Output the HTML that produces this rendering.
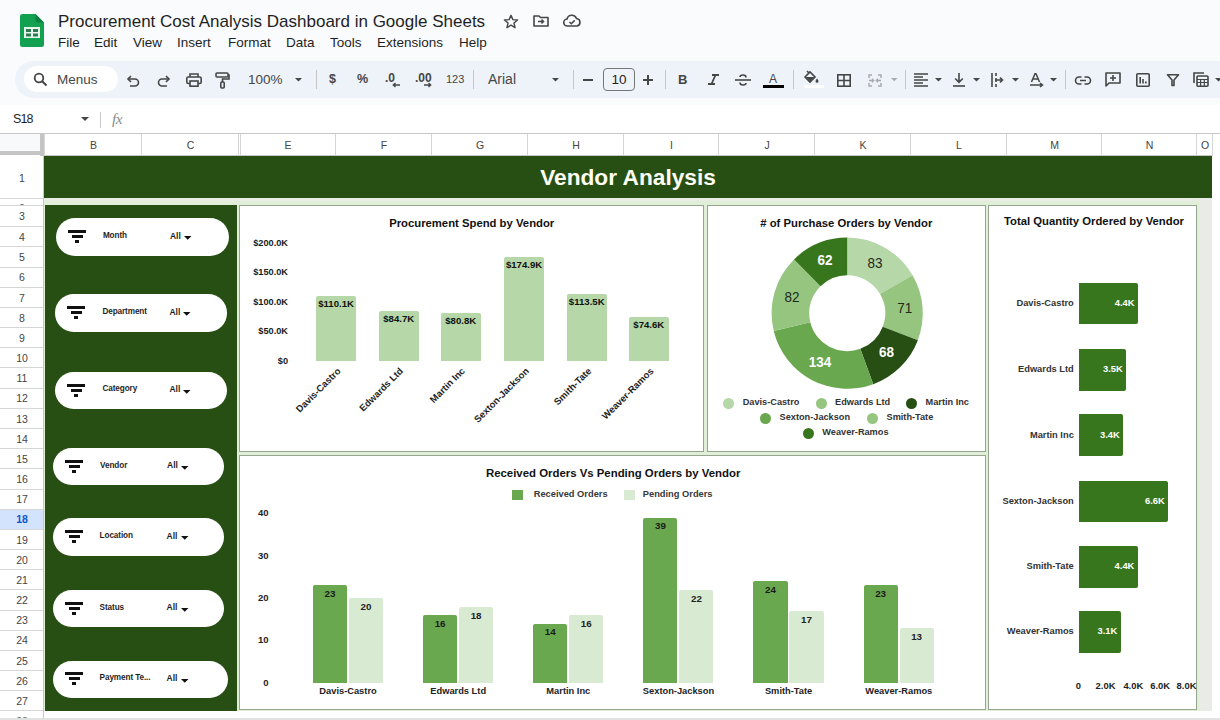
<!DOCTYPE html>
<html><head><meta charset="utf-8">
<style>
*{margin:0;padding:0;box-sizing:border-box}
html,body{width:1220px;height:720px;overflow:hidden;background:#f9fbfd;font-family:"Liberation Sans",sans-serif;color:#1f1f1f}
.a{position:absolute}
.t{position:absolute;white-space:nowrap;line-height:1}
svg{position:absolute;overflow:visible}
</style></head><body>
<div class="a" style="left:0px;top:0px;width:1220px;height:104px;background:#f9fbfd;"></div>
<svg style="left:20px;top:14px" width="24" height="33" viewBox="0 0 24 33">
<path d="M2.5 0H15.5L24 8.5V30.5a2.5 2.5 0 0 1-2.5 2.5H2.5A2.5 2.5 0 0 1 0 30.5V2.5A2.5 2.5 0 0 1 2.5 0z" fill="#11a150"/>
<path d="M15.5 0L24 8.5H18a2.5 2.5 0 0 1-2.5-2.5z" fill="#0b8043"/>
<rect x="4" y="13" width="16" height="11" fill="#e8f5ea"/>
<rect x="6" y="15" width="5" height="3" fill="#2b7a52"/><rect x="13" y="15" width="5" height="3" fill="#2b7a52"/>
<rect x="6" y="19.5" width="5" height="3" fill="#2b7a52"/><rect x="13" y="19.5" width="5" height="3" fill="#2b7a52"/>
</svg>
<div class="t" style="left:58px;top:13px;font-size:17px;color:#1f1f1f;">Procurement Cost Analysis Dashboard in Google Sheets</div>
<div class="t" style="left:58px;top:36px;font-size:13.5px;color:#1f1f1f;">File</div>
<div class="t" style="left:94px;top:36px;font-size:13.5px;color:#1f1f1f;">Edit</div>
<div class="t" style="left:133px;top:36px;font-size:13.5px;color:#1f1f1f;">View</div>
<div class="t" style="left:177px;top:36px;font-size:13.5px;color:#1f1f1f;">Insert</div>
<div class="t" style="left:228px;top:36px;font-size:13.5px;color:#1f1f1f;">Format</div>
<div class="t" style="left:286px;top:36px;font-size:13.5px;color:#1f1f1f;">Data</div>
<div class="t" style="left:330px;top:36px;font-size:13.5px;color:#1f1f1f;">Tools</div>
<div class="t" style="left:377px;top:36px;font-size:13.5px;color:#1f1f1f;">Extensions</div>
<div class="t" style="left:459px;top:36px;font-size:13.5px;color:#1f1f1f;">Help</div>
<svg style="left:503px;top:14px" width="16" height="15" viewBox="0 0 24 23"><path d="M12 2l2.9 6.6 7.1.6-5.4 4.7 1.6 7-6.2-3.7-6.2 3.7 1.6-7L2 9.2l7.1-.6z" fill="none" stroke="#444746" stroke-width="2.2" stroke-linejoin="round"/></svg>
<svg style="left:533px;top:15px" width="16" height="12" viewBox="0 0 16 12"><path d="M1 1h5l1.5 1.5H15V11H1z" fill="none" stroke="#444746" stroke-width="1.6" stroke-linejoin="round"/><path d="M5 6.5h5.5M8.5 4.5l2 2-2 2" fill="none" stroke="#444746" stroke-width="1.5"/></svg>
<svg style="left:563px;top:15px" width="18" height="12" viewBox="0 0 18 12"><path d="M4.5 11a3.5 3.5 0 0 1-.5-7A5 5 0 0 1 13.5 3.5 3.8 3.8 0 0 1 14 11z" fill="none" stroke="#444746" stroke-width="1.6"/><path d="M6.5 7l1.8 1.8 3.4-3.4" fill="none" stroke="#444746" stroke-width="1.5"/></svg>
<div class="a" style="left:15px;top:61px;width:1230px;height:37px;background:#eef2f9;border-radius:18.5px"></div>
<div class="a" style="left:24px;top:66px;width:94px;height:26px;background:#fff;border-radius:13px"></div>
<svg style="left:33px;top:72px" width="15" height="15" viewBox="0 0 15 15"><circle cx="6" cy="6" r="4.3" fill="none" stroke="#444746" stroke-width="1.8"/><path d="M9.2 9.2l4.3 4.3" stroke="#444746" stroke-width="2"/></svg>
<div class="t" style="left:57px;top:73px;font-size:13.5px;color:#444746;">Menus</div>
<svg style="left:127px;top:75px" width="13" height="12" viewBox="0 0 13 12"><path d="M4 1L1 4l3 3" fill="none" stroke="#444746" stroke-width="1.6"/><path d="M1.5 4H8a3.5 3.5 0 0 1 0 7H3" fill="none" stroke="#444746" stroke-width="1.6"/></svg>
<svg style="left:157px;top:75px" width="13" height="12" viewBox="0 0 13 12"><path d="M9 1l3 3-3 3" fill="none" stroke="#444746" stroke-width="1.6"/><path d="M11.5 4H5a3.5 3.5 0 0 0 0 7h5" fill="none" stroke="#444746" stroke-width="1.6"/></svg>
<svg style="left:186px;top:73px" width="16" height="14" viewBox="0 0 16 14"><path d="M4 4V1h8v3" fill="none" stroke="#444746" stroke-width="1.6"/><rect x="0.8" y="4" width="14.4" height="6.5" rx="1.5" fill="none" stroke="#444746" stroke-width="1.6"/><rect x="4" y="8" width="8" height="5.2" fill="#edf2fa" stroke="#444746" stroke-width="1.6"/></svg>
<svg style="left:215px;top:72px" width="15" height="17" viewBox="0 0 15 17"><rect x="1" y="1" width="12" height="4" rx="1" fill="none" stroke="#444746" stroke-width="1.6"/><path d="M13 3h1v4H7.5v3" fill="none" stroke="#444746" stroke-width="1.6"/><rect x="5.8" y="10" width="3.4" height="6" rx="1" fill="none" stroke="#444746" stroke-width="1.6"/></svg>
<div class="t" style="left:248px;top:73px;font-size:13.5px;color:#444746;">100%</div>
<svg style="left:294.5px;top:78px" width="7" height="3.5" viewBox="0 0 7 3.5"><path d="M0 0H7L3.5 3.5z" fill="#444746"/></svg>
<div class="a" style="left:315.5px;top:70px;width:1px;height:19px;background:#c7c7c7;"></div>
<div class="t" style="left:329px;top:73px;font-size:12.5px;color:#444746;font-weight:bold;">$</div>
<div class="t" style="left:357px;top:73px;font-size:12.5px;color:#444746;font-weight:bold;">%</div>
<div class="t" style="left:385px;top:72px;font-size:12px;color:#444746;font-weight:bold;">.0</div>
<svg style="left:392px;top:82px" width="8" height="6" viewBox="0 0 8 6"><path d="M8 3H1.5M3.5 1L1.3 3l2.2 2" fill="none" stroke="#444746" stroke-width="1.4"/></svg>
<div class="t" style="left:415px;top:72px;font-size:12px;color:#444746;font-weight:bold;">.00</div>
<svg style="left:424px;top:82px" width="8" height="6" viewBox="0 0 8 6"><path d="M0 3H6.5M4.5 1l2.2 2-2.2 2" fill="none" stroke="#444746" stroke-width="1.4"/></svg>
<div class="t" style="left:446px;top:74px;font-size:11px;color:#444746;">123</div>
<div class="a" style="left:473px;top:70px;width:1px;height:19px;background:#c7c7c7;"></div>
<div class="t" style="left:488px;top:72px;font-size:14px;color:#444746;">Arial</div>
<svg style="left:552px;top:78px" width="7" height="3.5" viewBox="0 0 7 3.5"><path d="M0 0H7L3.5 3.5z" fill="#444746"/></svg>
<div class="a" style="left:573px;top:70px;width:1px;height:19px;background:#c7c7c7;"></div>
<div class="a" style="left:583px;top:79px;width:10px;height:1.6px;background:#444746;"></div>
<div class="a" style="left:603px;top:68px;width:32px;height:23px;border:1px solid #747775;border-radius:4px"></div>
<div class="t" style="left:619px;top:73px;font-size:13.5px;color:#1f1f1f;transform:translateX(-50%);">10</div>
<div class="a" style="left:643px;top:79px;width:10px;height:1.6px;background:#444746;"></div>
<div class="a" style="left:647.2px;top:74.8px;width:1.6px;height:10px;background:#444746;"></div>
<div class="a" style="left:664.5px;top:70px;width:1px;height:19px;background:#c7c7c7;"></div>
<div class="t" style="left:678px;top:73px;font-size:13px;color:#444746;font-weight:bold;">B</div>
<svg style="left:708px;top:74px" width="11" height="11" viewBox="0 0 11 11"><path d="M4 1H11M0 10H7M7.5 1L3.5 10" fill="none" stroke="#444746" stroke-width="1.8"/></svg>
<svg style="left:735px;top:74px" width="16" height="12" viewBox="0 0 16 12"><path d="M0 6H16" stroke="#444746" stroke-width="1.6"/><path d="M11 3.5C11 1.8 9.8 1 8 1S5 1.8 5 3" fill="none" stroke="#444746" stroke-width="1.6"/><path d="M5 8.5C5 10.2 6.2 11 8 11S11 10.2 11 9" fill="none" stroke="#444746" stroke-width="1.6"/></svg>
<div class="t" style="left:769px;top:73px;font-size:12px;color:#444746;">A</div>
<div class="a" style="left:763px;top:85px;width:21px;height:3px;background:#000;"></div>
<div class="a" style="left:793px;top:70px;width:1px;height:19px;background:#c7c7c7;"></div>
<svg style="left:803px;top:70px" width="16" height="13" viewBox="0 0 16 13"><path d="M4 1l1.5 1.5M2 7l5-5 5 5-5 5z" fill="none" stroke="#444746" stroke-width="1.6"/><path d="M2.5 7h9L7 11.5z" fill="#444746"/><path d="M14 8.5c0 0-1.5 1.8-1.5 2.7a1.5 1.5 0 0 0 3 0c0-.9-1.5-2.7-1.5-2.7z" fill="#444746"/></svg>
<div class="a" style="left:804px;top:85px;width:20px;height:3px;background:#fff;"></div>
<svg style="left:837px;top:74px" width="14" height="13" viewBox="0 0 14 13"><rect x="0.8" y="0.8" width="12.4" height="11.4" fill="none" stroke="#444746" stroke-width="1.6"/><path d="M7 1v11M1 6.5h12" stroke="#444746" stroke-width="1.6"/></svg>
<svg style="left:868px;top:74px" width="14" height="13" viewBox="0 0 14 13"><path d="M1 4V1h3M13 4V1h-3M1 9v3h3M13 9v3h-3" fill="none" stroke="#a8abae" stroke-width="1.5"/><path d="M1 6.5h4.5M4 4.8l1.7 1.7L4 8.2M13 6.5H8.5M10 4.8L8.3 6.5 10 8.2" fill="none" stroke="#a8abae" stroke-width="1.4"/></svg>
<svg style="left:891px;top:78px" width="6.5" height="3.2" viewBox="0 0 6.5 3.2"><path d="M0 0H6.5L3.25 3.2z" fill="#a8abae"/></svg>
<div class="a" style="left:904.5px;top:70px;width:1px;height:19px;background:#c7c7c7;"></div>
<svg style="left:913.5px;top:73px" width="14" height="14" viewBox="0 0 14 14"><path d="M0 1H14M0 4H9M0 7H14M0 10H9M0 13H14" stroke="#444746" stroke-width="1.5"/></svg>
<svg style="left:934.5px;top:78px" width="7" height="3.5" viewBox="0 0 7 3.5"><path d="M0 0H7L3.5 3.5z" fill="#444746"/></svg>
<svg style="left:953px;top:73px" width="12" height="14" viewBox="0 0 12 14"><path d="M6 0V9M2.2 5.5L6 9.3l3.8-3.8" fill="none" stroke="#444746" stroke-width="1.6"/><path d="M0 13H12" stroke="#444746" stroke-width="1.6"/></svg>
<svg style="left:973px;top:78px" width="7" height="3.5" viewBox="0 0 7 3.5"><path d="M0 0H7L3.5 3.5z" fill="#444746"/></svg>
<svg style="left:991px;top:73px" width="13" height="14" viewBox="0 0 13 14"><path d="M1 0V14" stroke="#444746" stroke-width="1.6"/><path d="M5 0v3M5 5v4M5 11v3" stroke="#444746" stroke-width="1.6"/><path d="M4 7h7M9 4.5L11.5 7 9 9.5" fill="none" stroke="#444746" stroke-width="1.6"/></svg>
<svg style="left:1011.5px;top:78px" width="7" height="3.5" viewBox="0 0 7 3.5"><path d="M0 0H7L3.5 3.5z" fill="#444746"/></svg>
<svg style="left:1030px;top:73px" width="14" height="14" viewBox="0 0 14 14"><path d="M1.5 9L5 0.8h1L9.5 9M3 6h5" fill="none" stroke="#444746" stroke-width="1.5"/><path d="M0 12H12M10 10l2.5 2-2.5 2" fill="none" stroke="#444746" stroke-width="1.5"/></svg>
<svg style="left:1050px;top:78px" width="7" height="3.5" viewBox="0 0 7 3.5"><path d="M0 0H7L3.5 3.5z" fill="#444746"/></svg>
<div class="a" style="left:1065px;top:70px;width:1px;height:19px;background:#c7c7c7;"></div>
<svg style="left:1075px;top:76px" width="16" height="9" viewBox="0 0 16 9"><path d="M6.5 1H4a3.5 3.5 0 0 0 0 7h2.5M9.5 1H12a3.5 3.5 0 0 1 0 7H9.5M5 4.5h6" fill="none" stroke="#444746" stroke-width="1.6"/></svg>
<svg style="left:1105px;top:72px" width="16" height="15" viewBox="0 0 16 15"><path d="M1 1h14v10H4l-3 3z" fill="none" stroke="#444746" stroke-width="1.6" stroke-linejoin="round"/><path d="M8 3v6M5 6h6" stroke="#444746" stroke-width="1.6"/></svg>
<svg style="left:1136px;top:73px" width="14" height="14" viewBox="0 0 14 14"><rect x="0.8" y="0.8" width="12.4" height="12.4" rx="1" fill="none" stroke="#444746" stroke-width="1.6"/><path d="M4.2 4v6.5M7 6v4.5M9.8 8.5v2" stroke="#444746" stroke-width="1.6"/></svg>
<svg style="left:1167px;top:74px" width="12" height="12" viewBox="0 0 12 12"><path d="M0.5 0.8h11L7 6v5.5H5V6z" fill="none" stroke="#444746" stroke-width="1.6" stroke-linejoin="round"/></svg>
<svg style="left:1193px;top:72px" width="16" height="15" viewBox="0 0 16 15"><path d="M1 11V1h10" fill="none" stroke="#444746" stroke-width="1.6"/><rect x="4" y="4" width="11" height="10.3" rx="1" fill="none" stroke="#444746" stroke-width="1.6"/><path d="M4 7.5h11M4 10.5h11M7.6 7.5v7M11.3 7.5v7" stroke="#444746" stroke-width="1.2"/></svg>
<svg style="left:1215px;top:78px" width="7" height="3.5" viewBox="0 0 7 3.5"><path d="M0 0H7L3.5 3.5z" fill="#444746"/></svg>
<div class="a" style="left:0px;top:104.5px;width:1220px;height:28.5px;background:#fff;"></div>
<div class="t" style="left:13px;top:113px;font-size:12.5px;color:#1f1f1f;letter-spacing:-0.9px;">S18</div>
<svg style="left:81px;top:117px" width="8" height="4" viewBox="0 0 8 4"><path d="M0 0H8L4.0 4z" fill="#444746"/></svg>
<div class="a" style="left:100px;top:112px;width:1px;height:16px;background:#c7c7c7;"></div>
<div class="t" style="left:112px;top:110.5px;font-size:15.5px;color:#8c8c8c;font-style:italic;font-family:'Liberation Serif',serif;letter-spacing:-0.5px">fx</div>
<div class="a" style="left:0px;top:133px;width:1220px;height:587px;background:#fff;"></div>
<div class="a" style="left:0px;top:133px;width:1220px;height:1px;background:#c7c7c7;"></div>
<div class="a" style="left:141px;top:134px;width:1px;height:22px;background:#d6d6d6;"></div>
<div class="t" style="left:93.5px;top:139.5px;font-size:10.5px;color:#444;transform:translateX(-50%);">B</div>
<div class="a" style="left:238px;top:134px;width:1px;height:22px;background:#d6d6d6;"></div>
<div class="t" style="left:190.5px;top:139.5px;font-size:10.5px;color:#444;transform:translateX(-50%);">C</div>
<div class="a" style="left:335px;top:134px;width:1px;height:22px;background:#d6d6d6;"></div>
<div class="t" style="left:288.0px;top:139.5px;font-size:10.5px;color:#444;transform:translateX(-50%);">E</div>
<div class="a" style="left:431px;top:134px;width:1px;height:22px;background:#d6d6d6;"></div>
<div class="t" style="left:384.0px;top:139.5px;font-size:10.5px;color:#444;transform:translateX(-50%);">F</div>
<div class="a" style="left:527px;top:134px;width:1px;height:22px;background:#d6d6d6;"></div>
<div class="t" style="left:480.0px;top:139.5px;font-size:10.5px;color:#444;transform:translateX(-50%);">G</div>
<div class="a" style="left:623px;top:134px;width:1px;height:22px;background:#d6d6d6;"></div>
<div class="t" style="left:576.0px;top:139.5px;font-size:10.5px;color:#444;transform:translateX(-50%);">H</div>
<div class="a" style="left:718px;top:134px;width:1px;height:22px;background:#d6d6d6;"></div>
<div class="t" style="left:671.5px;top:139.5px;font-size:10.5px;color:#444;transform:translateX(-50%);">I</div>
<div class="a" style="left:814px;top:134px;width:1px;height:22px;background:#d6d6d6;"></div>
<div class="t" style="left:767.0px;top:139.5px;font-size:10.5px;color:#444;transform:translateX(-50%);">J</div>
<div class="a" style="left:910px;top:134px;width:1px;height:22px;background:#d6d6d6;"></div>
<div class="t" style="left:863.0px;top:139.5px;font-size:10.5px;color:#444;transform:translateX(-50%);">K</div>
<div class="a" style="left:1006px;top:134px;width:1px;height:22px;background:#d6d6d6;"></div>
<div class="t" style="left:959.0px;top:139.5px;font-size:10.5px;color:#444;transform:translateX(-50%);">L</div>
<div class="a" style="left:1101px;top:134px;width:1px;height:22px;background:#d6d6d6;"></div>
<div class="t" style="left:1054.5px;top:139.5px;font-size:10.5px;color:#444;transform:translateX(-50%);">M</div>
<div class="a" style="left:1196px;top:134px;width:1px;height:22px;background:#d6d6d6;"></div>
<div class="t" style="left:1149.5px;top:139.5px;font-size:10.5px;color:#444;transform:translateX(-50%);">N</div>
<div class="a" style="left:1212px;top:134px;width:1px;height:22px;background:#d6d6d6;"></div>
<div class="t" style="left:1205.0px;top:139.5px;font-size:10.5px;color:#444;transform:translateX(-50%);">O</div>
<div class="a" style="left:238px;top:134px;width:1px;height:22px;background:#d6d6d6;"></div>
<div class="a" style="left:240px;top:134px;width:1px;height:22px;background:#d6d6d6;"></div>
<div class="a" style="left:44px;top:155px;width:1168px;height:1px;background:#c7c7c7;"></div>
<div class="a" style="left:0px;top:134px;width:40px;height:18px;background:#f8f9fa;"></div>
<div class="a" style="left:40px;top:133px;width:4px;height:23px;background:#c4c4c4;"></div>
<div class="a" style="left:0px;top:151px;width:44px;height:4px;background:#c4c4c4;"></div>
<div class="a" style="left:44px;top:134px;width:1px;height:22px;background:#d6d6d6;"></div>
<div class="a" style="left:43px;top:156px;width:1px;height:564px;background:#c7c7c7;"></div>
<div class="a" style="left:0px;top:198px;width:43px;height:1px;background:#d6d6d6;"></div>
<div class="t" style="left:22px;top:172.95px;font-size:10.5px;color:#444;transform:translateX(-50%);">1</div>
<div class="a" style="left:0px;top:205px;width:43px;height:1px;background:#d6d6d6;"></div>
<div class="a" style="left:12px;top:203px;width:20px;height:2px;overflow:hidden"><div class="t" style="left:10px;top:-0.5px;font-size:10.5px;color:#666;transform:translateX(-50%)">2</div></div>
<div class="a" style="left:0px;top:226px;width:43px;height:1px;background:#d6d6d6;"></div>
<div class="t" style="left:22px;top:211.35px;font-size:10.5px;color:#444;transform:translateX(-50%);">3</div>
<div class="a" style="left:0px;top:246px;width:43px;height:1px;background:#d6d6d6;"></div>
<div class="t" style="left:22px;top:232.085px;font-size:10.5px;color:#444;transform:translateX(-50%);">4</div>
<div class="a" style="left:0px;top:267px;width:43px;height:1px;background:#d6d6d6;"></div>
<div class="t" style="left:22px;top:252.25500000000005px;font-size:10.5px;color:#444;transform:translateX(-50%);">5</div>
<div class="a" style="left:0px;top:287px;width:43px;height:1px;background:#d6d6d6;"></div>
<div class="t" style="left:22px;top:272.425px;font-size:10.5px;color:#444;transform:translateX(-50%);">6</div>
<div class="a" style="left:0px;top:307px;width:43px;height:1px;background:#d6d6d6;"></div>
<div class="t" style="left:22px;top:292.5950000000001px;font-size:10.5px;color:#444;transform:translateX(-50%);">7</div>
<div class="a" style="left:0px;top:327px;width:43px;height:1px;background:#d6d6d6;"></div>
<div class="t" style="left:22px;top:312.76500000000004px;font-size:10.5px;color:#444;transform:translateX(-50%);">8</div>
<div class="a" style="left:0px;top:347px;width:43px;height:1px;background:#d6d6d6;"></div>
<div class="t" style="left:22px;top:332.9350000000001px;font-size:10.5px;color:#444;transform:translateX(-50%);">9</div>
<div class="a" style="left:0px;top:367px;width:43px;height:1px;background:#d6d6d6;"></div>
<div class="t" style="left:22px;top:353.1050000000001px;font-size:10.5px;color:#444;transform:translateX(-50%);">10</div>
<div class="a" style="left:0px;top:388px;width:43px;height:1px;background:#d6d6d6;"></div>
<div class="t" style="left:22px;top:373.27500000000015px;font-size:10.5px;color:#444;transform:translateX(-50%);">11</div>
<div class="a" style="left:0px;top:408px;width:43px;height:1px;background:#d6d6d6;"></div>
<div class="t" style="left:22px;top:393.4450000000001px;font-size:10.5px;color:#444;transform:translateX(-50%);">12</div>
<div class="a" style="left:0px;top:428px;width:43px;height:1px;background:#d6d6d6;"></div>
<div class="t" style="left:22px;top:413.6150000000002px;font-size:10.5px;color:#444;transform:translateX(-50%);">13</div>
<div class="a" style="left:0px;top:448px;width:43px;height:1px;background:#d6d6d6;"></div>
<div class="t" style="left:22px;top:433.78500000000014px;font-size:10.5px;color:#444;transform:translateX(-50%);">14</div>
<div class="a" style="left:0px;top:468px;width:43px;height:1px;background:#d6d6d6;"></div>
<div class="t" style="left:22px;top:453.9550000000002px;font-size:10.5px;color:#444;transform:translateX(-50%);">15</div>
<div class="a" style="left:0px;top:489px;width:43px;height:1px;background:#d6d6d6;"></div>
<div class="t" style="left:22px;top:474.12500000000017px;font-size:10.5px;color:#444;transform:translateX(-50%);">16</div>
<div class="a" style="left:0px;top:509px;width:43px;height:1px;background:#d6d6d6;"></div>
<div class="t" style="left:22px;top:494.29500000000024px;font-size:10.5px;color:#444;transform:translateX(-50%);">17</div>
<div class="a" style="left:0px;top:529px;width:43px;height:1px;background:#d6d6d6;"></div>
<div class="a" style="left:0px;top:510px;width:43px;height:19px;background:#d3e3fd;"></div>
<div class="t" style="left:22px;top:514.4650000000003px;font-size:10.5px;color:#0b57d0;font-weight:bold;transform:translateX(-50%);">18</div>
<div class="a" style="left:0px;top:549px;width:43px;height:1px;background:#d6d6d6;"></div>
<div class="t" style="left:22px;top:534.6350000000002px;font-size:10.5px;color:#444;transform:translateX(-50%);">19</div>
<div class="a" style="left:0px;top:569px;width:43px;height:1px;background:#d6d6d6;"></div>
<div class="t" style="left:22px;top:554.8050000000003px;font-size:10.5px;color:#444;transform:translateX(-50%);">20</div>
<div class="a" style="left:0px;top:589px;width:43px;height:1px;background:#d6d6d6;"></div>
<div class="t" style="left:22px;top:574.9750000000001px;font-size:10.5px;color:#444;transform:translateX(-50%);">21</div>
<div class="a" style="left:0px;top:610px;width:43px;height:1px;background:#d6d6d6;"></div>
<div class="t" style="left:22px;top:595.1450000000002px;font-size:10.5px;color:#444;transform:translateX(-50%);">22</div>
<div class="a" style="left:0px;top:630px;width:43px;height:1px;background:#d6d6d6;"></div>
<div class="t" style="left:22px;top:615.315px;font-size:10.5px;color:#444;transform:translateX(-50%);">23</div>
<div class="a" style="left:0px;top:650px;width:43px;height:1px;background:#d6d6d6;"></div>
<div class="t" style="left:22px;top:635.4850000000001px;font-size:10.5px;color:#444;transform:translateX(-50%);">24</div>
<div class="a" style="left:0px;top:670px;width:43px;height:1px;background:#d6d6d6;"></div>
<div class="t" style="left:22px;top:655.655px;font-size:10.5px;color:#444;transform:translateX(-50%);">25</div>
<div class="a" style="left:0px;top:690px;width:43px;height:1px;background:#d6d6d6;"></div>
<div class="t" style="left:22px;top:675.825px;font-size:10.5px;color:#444;transform:translateX(-50%);">26</div>
<div class="a" style="left:0px;top:710px;width:43px;height:1px;background:#d6d6d6;"></div>
<div class="t" style="left:22px;top:695.9949999999999px;font-size:10.5px;color:#444;transform:translateX(-50%);">27</div>
<div class="a" style="left:44px;top:156px;width:1168px;height:41.6px;background:#274e13;"></div>
<div class="t" style="left:628px;top:166px;font-size:22.7px;color:#fffff5;font-weight:bold;transform:translateX(-50%);">Vendor Analysis</div>
<div class="a" style="left:44px;top:197.6px;width:1153px;height:513.4px;background:#e1efd9;"></div>
<div class="a" style="left:44px;top:197.6px;width:1153px;height:3px;background:#e9ece4;"></div>
<div class="a" style="left:1197px;top:197.6px;width:15px;height:513.4px;background:#e9ece6;"></div>
<div class="a" style="left:1197px;top:197.6px;width:2px;height:513.4px;background:#e1efd9;"></div>
<div class="a" style="left:45px;top:205px;width:191.5px;height:506px;background:#274e13;"></div>
<div class="a" style="left:239px;top:205px;width:465px;height:247px;background:#fff;border:1px solid #94a68f"></div>
<div class="a" style="left:707px;top:205px;width:279px;height:247px;background:#fff;border:1px solid #94a68f"></div>
<div class="a" style="left:988px;top:205px;width:209px;height:505px;background:#fff;border:1px solid #94a68f"></div>
<div class="a" style="left:239px;top:455px;width:747px;height:255px;background:#fff;border:1px solid #94a68f"></div>
<div class="a" style="left:0px;top:718px;width:1220px;height:2px;background:#e1e3e1;"></div>
<div class="a" style="left:12px;top:716.5px;width:20px;height:1.5px;overflow:hidden"><div class="t" style="left:10px;top:-0.5px;font-size:10.5px;color:#666;transform:translateX(-50%)">28</div></div>
<div class="a" style="left:55.9px;top:218.1px;width:172.9px;height:38.2px;background:#fff;border-radius:19.10000000000001px"></div>
<div class="a" style="left:68px;top:230px;width:18px;height:3px;background:#111;"></div>
<div class="a" style="left:72px;top:235px;width:11px;height:2.5px;background:#111;"></div>
<div class="a" style="left:75px;top:240px;width:4px;height:2.5px;background:#111;"></div>
<div class="t" style="left:102.9px;top:232.1px;font-size:8.2px;color:#1f1f1f;font-weight:bold;letter-spacing:-0.1px;">Month</div>
<div class="t" style="left:169.9px;top:231.7px;font-size:8.5px;color:#1f1f1f;font-weight:bold;">All</div>
<svg style="left:183.9px;top:236.4px" width="7.5" height="3.8" viewBox="0 0 7.5 3.8"><path d="M0 0H7.5L3.75 3.8z" fill="#111"/></svg>
<div class="a" style="left:55.4px;top:294.4px;width:172.1px;height:37.3px;background:#fff;border-radius:18.650000000000006px"></div>
<div class="a" style="left:67px;top:306px;width:18px;height:3px;background:#111;"></div>
<div class="a" style="left:71px;top:311px;width:11px;height:2.5px;background:#111;"></div>
<div class="a" style="left:74px;top:316px;width:4px;height:2.5px;background:#111;"></div>
<div class="t" style="left:102.4px;top:307.94999999999993px;font-size:8.2px;color:#1f1f1f;font-weight:bold;letter-spacing:-0.1px;">Department</div>
<div class="t" style="left:169.4px;top:307.54999999999995px;font-size:8.5px;color:#1f1f1f;font-weight:bold;">All</div>
<svg style="left:183.4px;top:312.2px" width="7.5" height="3.8" viewBox="0 0 7.5 3.8"><path d="M0 0H7.5L3.75 3.8z" fill="#111"/></svg>
<div class="a" style="left:55.4px;top:371.7px;width:172.1px;height:37.3px;background:#fff;border-radius:18.650000000000006px"></div>
<div class="a" style="left:67px;top:384px;width:18px;height:3px;background:#111;"></div>
<div class="a" style="left:71px;top:389px;width:11px;height:2.5px;background:#111;"></div>
<div class="a" style="left:74px;top:394px;width:4px;height:2.5px;background:#111;"></div>
<div class="t" style="left:102.4px;top:385.25px;font-size:8.2px;color:#1f1f1f;font-weight:bold;letter-spacing:-0.1px;">Category</div>
<div class="t" style="left:169.4px;top:384.85px;font-size:8.5px;color:#1f1f1f;font-weight:bold;">All</div>
<svg style="left:183.4px;top:389.6px" width="7.5" height="3.8" viewBox="0 0 7.5 3.8"><path d="M0 0H7.5L3.75 3.8z" fill="#111"/></svg>
<div class="a" style="left:53.1px;top:448.1px;width:170.9px;height:37.3px;background:#fff;border-radius:18.649999999999977px"></div>
<div class="a" style="left:65px;top:460px;width:18px;height:3px;background:#111;"></div>
<div class="a" style="left:69px;top:465px;width:11px;height:2.5px;background:#111;"></div>
<div class="a" style="left:72px;top:470px;width:4px;height:2.5px;background:#111;"></div>
<div class="t" style="left:100.1px;top:461.65px;font-size:8.2px;color:#1f1f1f;font-weight:bold;letter-spacing:-0.1px;">Vendor</div>
<div class="t" style="left:167.1px;top:461.25px;font-size:8.5px;color:#1f1f1f;font-weight:bold;">All</div>
<svg style="left:181.1px;top:465.9px" width="7.5" height="3.8" viewBox="0 0 7.5 3.8"><path d="M0 0H7.5L3.75 3.8z" fill="#111"/></svg>
<div class="a" style="left:52.6px;top:518.3px;width:171.4px;height:37.7px;background:#fff;border-radius:18.850000000000023px"></div>
<div class="a" style="left:65px;top:530px;width:18px;height:3px;background:#111;"></div>
<div class="a" style="left:69px;top:535px;width:11px;height:2.5px;background:#111;"></div>
<div class="a" style="left:72px;top:540px;width:4px;height:2.5px;background:#111;"></div>
<div class="t" style="left:99.6px;top:532.05px;font-size:8.2px;color:#1f1f1f;font-weight:bold;letter-spacing:-0.1px;">Location</div>
<div class="t" style="left:166.6px;top:531.65px;font-size:8.5px;color:#1f1f1f;font-weight:bold;">All</div>
<svg style="left:180.6px;top:536.4px" width="7.5" height="3.8" viewBox="0 0 7.5 3.8"><path d="M0 0H7.5L3.75 3.8z" fill="#111"/></svg>
<div class="a" style="left:52.6px;top:590.2px;width:171.4px;height:37.2px;background:#fff;border-radius:18.599999999999966px"></div>
<div class="a" style="left:65px;top:602px;width:18px;height:3px;background:#111;"></div>
<div class="a" style="left:69px;top:607px;width:11px;height:2.5px;background:#111;"></div>
<div class="a" style="left:72px;top:612px;width:4px;height:2.5px;background:#111;"></div>
<div class="t" style="left:99.6px;top:603.6999999999999px;font-size:8.2px;color:#1f1f1f;font-weight:bold;letter-spacing:-0.1px;">Status</div>
<div class="t" style="left:166.6px;top:603.3px;font-size:8.5px;color:#1f1f1f;font-weight:bold;">All</div>
<svg style="left:180.6px;top:608.0px" width="7.5" height="3.8" viewBox="0 0 7.5 3.8"><path d="M0 0H7.5L3.75 3.8z" fill="#111"/></svg>
<div class="a" style="left:52.6px;top:660.5px;width:175.7px;height:37.5px;background:#fff;border-radius:18.75px"></div>
<div class="a" style="left:65px;top:672px;width:18px;height:3px;background:#111;"></div>
<div class="a" style="left:69px;top:677px;width:11px;height:2.5px;background:#111;"></div>
<div class="a" style="left:72px;top:682px;width:4px;height:2.5px;background:#111;"></div>
<div class="t" style="left:99.6px;top:674.15px;font-size:8.2px;color:#1f1f1f;font-weight:bold;letter-spacing:-0.1px;">Payment Te...</div>
<div class="t" style="left:166.6px;top:673.75px;font-size:8.5px;color:#1f1f1f;font-weight:bold;">All</div>
<svg style="left:180.6px;top:678.5px" width="7.5" height="3.8" viewBox="0 0 7.5 3.8"><path d="M0 0H7.5L3.75 3.8z" fill="#111"/></svg>
<div class="t" style="left:471.7px;top:217.5px;font-size:11.3px;color:#111;font-weight:bold;transform:translateX(-50%);">Procurement Spend by Vendor</div>
<div class="t" style="left:288px;top:238.6px;font-size:9.2px;color:#1a1a1a;font-weight:bold;transform:translateX(-100%);">$200.0K</div>
<div class="t" style="left:288px;top:268.225px;font-size:9.2px;color:#1a1a1a;font-weight:bold;transform:translateX(-100%);">$150.0K</div>
<div class="t" style="left:288px;top:297.85px;font-size:9.2px;color:#1a1a1a;font-weight:bold;transform:translateX(-100%);">$100.0K</div>
<div class="t" style="left:288px;top:327.475px;font-size:9.2px;color:#1a1a1a;font-weight:bold;transform:translateX(-100%);">$50.0K</div>
<div class="t" style="left:288px;top:357.1px;font-size:9.2px;color:#1a1a1a;font-weight:bold;transform:translateX(-100%);">$0</div>
<div class="a" style="left:316px;top:295.8px;width:40.2px;height:65.2px;background:#b6d7a8;border-radius:2px 2px 0 0"></div>
<div class="t" style="left:336.1px;top:298.56575000000004px;font-size:9.6px;color:#111;font-weight:bold;transform:translateX(-50%);">$110.1K</div>
<div class="a" style="left:335.5px;top:366px;width:0;height:0"><div class="t" style="right:0;top:0;font-size:9.5px;color:#1f1f1f;font-weight:bold;transform-origin:100% 0;transform:rotate(-45deg)">Davis-Castro</div></div>
<div class="a" style="left:378.6px;top:310.8px;width:40.2px;height:50.2px;background:#b6d7a8;border-radius:2px 2px 0 0"></div>
<div class="t" style="left:398.70000000000005px;top:313.61525px;font-size:9.6px;color:#111;font-weight:bold;transform:translateX(-50%);">$84.7K</div>
<div class="a" style="left:398.1px;top:366px;width:0;height:0"><div class="t" style="right:0;top:0;font-size:9.5px;color:#1f1f1f;font-weight:bold;transform-origin:100% 0;transform:rotate(-45deg)">Edwards Ltd</div></div>
<div class="a" style="left:440.6px;top:313.1px;width:40.2px;height:47.9px;background:#b6d7a8;border-radius:2px 2px 0 0"></div>
<div class="t" style="left:460.70000000000005px;top:315.926px;font-size:9.6px;color:#111;font-weight:bold;transform:translateX(-50%);">$80.8K</div>
<div class="a" style="left:460.1px;top:366px;width:0;height:0"><div class="t" style="right:0;top:0;font-size:9.5px;color:#1f1f1f;font-weight:bold;transform-origin:100% 0;transform:rotate(-45deg)">Martin Inc</div></div>
<div class="a" style="left:504px;top:257.4px;width:40.2px;height:103.6px;background:#b6d7a8;border-radius:2px 2px 0 0"></div>
<div class="t" style="left:524.1px;top:260.17175000000003px;font-size:9.6px;color:#111;font-weight:bold;transform:translateX(-50%);">$174.9K</div>
<div class="a" style="left:523.5px;top:366px;width:0;height:0"><div class="t" style="right:0;top:0;font-size:9.5px;color:#1f1f1f;font-weight:bold;transform-origin:100% 0;transform:rotate(-45deg)">Sexton-Jackson</div></div>
<div class="a" style="left:566.6px;top:293.8px;width:40.2px;height:67.2px;background:#b6d7a8;border-radius:2px 2px 0 0"></div>
<div class="t" style="left:586.7px;top:296.55125000000004px;font-size:9.6px;color:#111;font-weight:bold;transform:translateX(-50%);">$113.5K</div>
<div class="a" style="left:586.1px;top:366px;width:0;height:0"><div class="t" style="right:0;top:0;font-size:9.5px;color:#1f1f1f;font-weight:bold;transform-origin:100% 0;transform:rotate(-45deg)">Smith-Tate</div></div>
<div class="a" style="left:628.7px;top:316.8px;width:40.2px;height:44.2px;background:#b6d7a8;border-radius:2px 2px 0 0"></div>
<div class="t" style="left:648.8000000000001px;top:319.59950000000003px;font-size:9.6px;color:#111;font-weight:bold;transform:translateX(-50%);">$74.6K</div>
<div class="a" style="left:648.2px;top:366px;width:0;height:0"><div class="t" style="right:0;top:0;font-size:9.5px;color:#1f1f1f;font-weight:bold;transform-origin:100% 0;transform:rotate(-45deg)">Weaver-Ramos</div></div>
<div class="t" style="left:846.3px;top:217.5px;font-size:11.3px;color:#111;font-weight:bold;transform:translateX(-50%);"># of Purchase Orders by Vendor</div>
<svg style="left:0;top:0" width="1220" height="720" viewBox="0 0 1220 720"><path d="M847.20 237.60A75.6 75.6 0 0 1 912.51 275.13L880.03 294.06A38 38 0 0 0 847.20 275.20z" fill="#b6d7a8"/><path d="M912.51 275.13A75.6 75.6 0 0 1 917.84 340.14L882.70 326.74A38 38 0 0 0 880.03 294.06z" fill="#95c57f"/><path d="M917.84 340.14A75.6 75.6 0 0 1 873.26 384.17L860.30 348.87A38 38 0 0 0 882.70 326.74z" fill="#274e13"/><path d="M873.26 384.17A75.6 75.6 0 0 1 773.74 331.08L810.28 322.19A38 38 0 0 0 860.30 348.87z" fill="#6aa84f"/><path d="M773.74 331.08A75.6 75.6 0 0 1 794.08 259.41L820.50 286.16A38 38 0 0 0 810.28 322.19z" fill="#95c57f"/><path d="M794.08 259.41A75.6 75.6 0 0 1 847.20 237.60L847.20 275.20A38 38 0 0 0 820.50 286.16z" fill="#38761d"/></svg>
<div class="t" style="left:875px;top:255.89999999999998px;font-size:13.5px;color:#1e2a1c;transform:translateX(-50%) scaleY(1.12)">83</div>
<div class="t" style="left:904.8px;top:300.59999999999997px;font-size:13.5px;color:#1e2a1c;transform:translateX(-50%) scaleY(1.12)">71</div>
<div class="t" style="left:886.4px;top:345.3px;font-size:13.5px;color:#fff;font-weight:bold;transform:translateX(-50%) scaleY(1.12)">68</div>
<div class="t" style="left:820px;top:355.09999999999997px;font-size:13.5px;color:#fff;font-weight:bold;transform:translateX(-50%) scaleY(1.12)">134</div>
<div class="t" style="left:792px;top:289.59999999999997px;font-size:13.5px;color:#1e2a1c;transform:translateX(-50%) scaleY(1.12)">82</div>
<div class="t" style="left:825px;top:252.5px;font-size:13.5px;color:#fff;font-weight:bold;transform:translateX(-50%) scaleY(1.12)">62</div>
<div class="a" style="left:723.2px;top:398.0px;width:11px;height:11px;background:#b6d7a8;border-radius:50%"></div>
<div class="t" style="left:742.7px;top:398.40000000000003px;font-size:9.2px;color:#333;font-weight:bold;">Davis-Castro</div>
<div class="a" style="left:815.7px;top:398.0px;width:11px;height:11px;background:#95c57f;border-radius:50%"></div>
<div class="t" style="left:835.1px;top:398.40000000000003px;font-size:9.2px;color:#333;font-weight:bold;">Edwards Ltd</div>
<div class="a" style="left:906.4px;top:398.0px;width:11px;height:11px;background:#274e13;border-radius:50%"></div>
<div class="t" style="left:925.6px;top:398.40000000000003px;font-size:9.2px;color:#333;font-weight:bold;">Martin Inc</div>
<div class="a" style="left:759.9px;top:412.9px;width:11px;height:11px;background:#6aa84f;border-radius:50%"></div>
<div class="t" style="left:779.6px;top:413.3px;font-size:9.2px;color:#333;font-weight:bold;">Sexton-Jackson</div>
<div class="a" style="left:866.6px;top:412.9px;width:11px;height:11px;background:#95c57f;border-radius:50%"></div>
<div class="t" style="left:886.5px;top:413.3px;font-size:9.2px;color:#333;font-weight:bold;">Smith-Tate</div>
<div class="a" style="left:802.9px;top:427.9px;width:11px;height:11px;background:#38761d;border-radius:50%"></div>
<div class="t" style="left:822.3px;top:428.3px;font-size:9.2px;color:#333;font-weight:bold;">Weaver-Ramos</div>
<div class="t" style="left:1094px;top:216px;font-size:11.3px;color:#111;font-weight:bold;transform:translateX(-50%);">Total Quantity Ordered by Vendor</div>
<div class="a" style="left:1079.4px;top:282.6px;width:58.7px;height:41.8px;background:#38761d;border-radius:0 2px 2px 0"></div>
<div class="t" style="left:1073.8px;top:298.8px;font-size:9.3px;color:#333;font-weight:bold;transform:translateX(-100%);">Davis-Castro</div>
<div class="t" style="left:1134.6px;top:297.8px;font-size:9.4px;color:#fff;font-weight:bold;transform:translateX(-100%);">4.4K</div>
<div class="a" style="left:1079.4px;top:349.1px;width:46.9px;height:41.8px;background:#38761d;border-radius:0 2px 2px 0"></div>
<div class="t" style="left:1073.8px;top:365.3px;font-size:9.3px;color:#333;font-weight:bold;transform:translateX(-100%);">Edwards Ltd</div>
<div class="t" style="left:1122.8px;top:364.3px;font-size:9.4px;color:#fff;font-weight:bold;transform:translateX(-100%);">3.5K</div>
<div class="a" style="left:1079.4px;top:414.4px;width:43.9px;height:41.8px;background:#38761d;border-radius:0 2px 2px 0"></div>
<div class="t" style="left:1073.8px;top:430.59999999999997px;font-size:9.3px;color:#333;font-weight:bold;transform:translateX(-100%);">Martin Inc</div>
<div class="t" style="left:1119.8px;top:429.59999999999997px;font-size:9.4px;color:#fff;font-weight:bold;transform:translateX(-100%);">3.4K</div>
<div class="a" style="left:1079.4px;top:480.5px;width:88.9px;height:41.8px;background:#38761d;border-radius:0 2px 2px 0"></div>
<div class="t" style="left:1073.8px;top:496.7px;font-size:9.3px;color:#333;font-weight:bold;transform:translateX(-100%);">Sexton-Jackson</div>
<div class="t" style="left:1164.8px;top:495.7px;font-size:9.4px;color:#fff;font-weight:bold;transform:translateX(-100%);">6.6K</div>
<div class="a" style="left:1079.4px;top:545.9px;width:58.5px;height:41.8px;background:#38761d;border-radius:0 2px 2px 0"></div>
<div class="t" style="left:1073.8px;top:562.1px;font-size:9.3px;color:#333;font-weight:bold;transform:translateX(-100%);">Smith-Tate</div>
<div class="t" style="left:1134.4px;top:561.1px;font-size:9.4px;color:#fff;font-weight:bold;transform:translateX(-100%);">4.4K</div>
<div class="a" style="left:1079.4px;top:611.2px;width:41.4px;height:41.8px;background:#38761d;border-radius:0 2px 2px 0"></div>
<div class="t" style="left:1073.8px;top:627.4000000000001px;font-size:9.3px;color:#333;font-weight:bold;transform:translateX(-100%);">Weaver-Ramos</div>
<div class="t" style="left:1117.3px;top:626.4000000000001px;font-size:9.4px;color:#fff;font-weight:bold;transform:translateX(-100%);">3.1K</div>
<div class="t" style="left:1078.3px;top:681px;font-size:9.4px;color:#222;font-weight:bold;transform:translateX(-50%);">0</div>
<div class="t" style="left:1105.5px;top:681px;font-size:9.4px;color:#222;font-weight:bold;transform:translateX(-50%);">2.0K</div>
<div class="t" style="left:1133.3px;top:681px;font-size:9.4px;color:#222;font-weight:bold;transform:translateX(-50%);">4.0K</div>
<div class="t" style="left:1160.2px;top:681px;font-size:9.4px;color:#222;font-weight:bold;transform:translateX(-50%);">6.0K</div>
<div class="t" style="left:1186.5px;top:681px;font-size:9.4px;color:#222;font-weight:bold;transform:translateX(-50%);">8.0K</div>
<div class="t" style="left:613.2px;top:468px;font-size:11.4px;color:#111;font-weight:bold;transform:translateX(-50%);">Received Orders Vs Pending Orders by Vendor</div>
<div class="a" style="left:512.3px;top:489.6px;width:10.5px;height:10.5px;background:#6aa84f;"></div>
<div class="t" style="left:533.7px;top:490.2px;font-size:9.3px;color:#383838;font-weight:bold;">Received Orders</div>
<div class="a" style="left:624px;top:489.6px;width:10.5px;height:10.5px;background:#d9ead3;"></div>
<div class="t" style="left:642.8px;top:490.2px;font-size:9.3px;color:#383838;font-weight:bold;">Pending Orders</div>
<div class="t" style="left:268.6px;top:508.29999999999995px;font-size:9.5px;color:#222;font-weight:bold;transform:translateX(-100%);">40</div>
<div class="t" style="left:268.6px;top:550.675px;font-size:9.5px;color:#222;font-weight:bold;transform:translateX(-100%);">30</div>
<div class="t" style="left:268.6px;top:593.05px;font-size:9.5px;color:#222;font-weight:bold;transform:translateX(-100%);">20</div>
<div class="t" style="left:268.6px;top:635.425px;font-size:9.5px;color:#222;font-weight:bold;transform:translateX(-100%);">10</div>
<div class="t" style="left:268.6px;top:677.8px;font-size:9.5px;color:#222;font-weight:bold;transform:translateX(-100%);">0</div>
<div class="a" style="left:312.8px;top:585.3px;width:34.2px;height:97.5px;background:#6aa84f;border-radius:2px 2px 0 0"></div>
<div class="a" style="left:348.8px;top:598.0px;width:34.2px;height:84.8px;background:#d9ead3;border-radius:2px 2px 0 0"></div>
<div class="t" style="left:329.9px;top:588.8px;font-size:9.8px;color:#1a1a1a;font-weight:bold;transform:translateX(-50%);">23</div>
<div class="t" style="left:365.9px;top:602.0px;font-size:9.8px;color:#222;font-weight:bold;transform:translateX(-50%);">20</div>
<div class="t" style="left:348.0px;top:686.5px;font-size:9.3px;color:#222;font-weight:bold;transform:translateX(-50%);">Davis-Castro</div>
<div class="a" style="left:423.0px;top:615.0px;width:34.2px;height:67.8px;background:#6aa84f;border-radius:2px 2px 0 0"></div>
<div class="a" style="left:459.0px;top:606.5px;width:34.2px;height:76.3px;background:#d9ead3;border-radius:2px 2px 0 0"></div>
<div class="t" style="left:440.1px;top:618.5px;font-size:9.8px;color:#1a1a1a;font-weight:bold;transform:translateX(-50%);">16</div>
<div class="t" style="left:476.1px;top:610.5px;font-size:9.8px;color:#222;font-weight:bold;transform:translateX(-50%);">18</div>
<div class="t" style="left:458.2px;top:686.5px;font-size:9.3px;color:#222;font-weight:bold;transform:translateX(-50%);">Edwards Ltd</div>
<div class="a" style="left:533.1px;top:623.5px;width:34.2px;height:59.3px;background:#6aa84f;border-radius:2px 2px 0 0"></div>
<div class="a" style="left:569.1px;top:615.0px;width:34.2px;height:67.8px;background:#d9ead3;border-radius:2px 2px 0 0"></div>
<div class="t" style="left:550.2px;top:627.0px;font-size:9.8px;color:#1a1a1a;font-weight:bold;transform:translateX(-50%);">14</div>
<div class="t" style="left:586.2px;top:619.0px;font-size:9.8px;color:#222;font-weight:bold;transform:translateX(-50%);">16</div>
<div class="t" style="left:568.3px;top:686.5px;font-size:9.3px;color:#222;font-weight:bold;transform:translateX(-50%);">Martin Inc</div>
<div class="a" style="left:643.2px;top:517.5px;width:34.2px;height:165.3px;background:#6aa84f;border-radius:2px 2px 0 0"></div>
<div class="a" style="left:679.2px;top:589.6px;width:34.2px;height:93.2px;background:#d9ead3;border-radius:2px 2px 0 0"></div>
<div class="t" style="left:660.4px;top:521.0px;font-size:9.8px;color:#1a1a1a;font-weight:bold;transform:translateX(-50%);">39</div>
<div class="t" style="left:696.4px;top:593.6px;font-size:9.8px;color:#222;font-weight:bold;transform:translateX(-50%);">22</div>
<div class="t" style="left:678.5px;top:686.5px;font-size:9.3px;color:#222;font-weight:bold;transform:translateX(-50%);">Sexton-Jackson</div>
<div class="a" style="left:753.4px;top:581.1px;width:34.2px;height:101.7px;background:#6aa84f;border-radius:2px 2px 0 0"></div>
<div class="a" style="left:789.4px;top:610.8px;width:34.2px;height:72.0px;background:#d9ead3;border-radius:2px 2px 0 0"></div>
<div class="t" style="left:770.5px;top:584.6px;font-size:9.8px;color:#1a1a1a;font-weight:bold;transform:translateX(-50%);">24</div>
<div class="t" style="left:806.5px;top:614.8px;font-size:9.8px;color:#222;font-weight:bold;transform:translateX(-50%);">17</div>
<div class="t" style="left:788.6px;top:686.5px;font-size:9.3px;color:#222;font-weight:bold;transform:translateX(-50%);">Smith-Tate</div>
<div class="a" style="left:863.5px;top:585.3px;width:34.2px;height:97.5px;background:#6aa84f;border-radius:2px 2px 0 0"></div>
<div class="a" style="left:899.5px;top:627.7px;width:34.2px;height:55.1px;background:#d9ead3;border-radius:2px 2px 0 0"></div>
<div class="t" style="left:880.6px;top:588.8px;font-size:9.8px;color:#1a1a1a;font-weight:bold;transform:translateX(-50%);">23</div>
<div class="t" style="left:916.6px;top:631.7px;font-size:9.8px;color:#222;font-weight:bold;transform:translateX(-50%);">13</div>
<div class="t" style="left:898.8px;top:686.5px;font-size:9.3px;color:#222;font-weight:bold;transform:translateX(-50%);">Weaver-Ramos</div>
</body></html>
